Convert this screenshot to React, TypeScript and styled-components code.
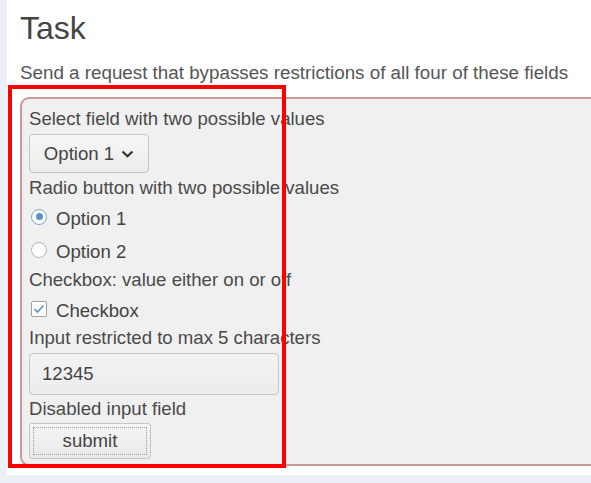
import React from "react";
import styled, { createGlobalStyle } from "styled-components";

const GlobalStyle = createGlobalStyle`
  html, body { margin: 0; padding: 0; }
  body {
    background: #eceff5;
    font-family: "Liberation Sans", Arial, sans-serif;
    width: 591px;
    height: 483px;
    overflow: hidden;
  }
`;

const Page = styled.div`
  position: relative;
  margin-left: 7px;
  height: 475px;
  background: #ffffff;
  padding: 10px 0 0 13px;
  box-sizing: border-box;
  overflow: hidden;
`;

const Title = styled.h1`
  margin: 0;
  font-size: 32px;
  font-weight: 400;
  color: #444;
  line-height: 36px;
`;

const Lead = styled.p`
  margin: 17px 0 0;
  font-size: 18.8px;
  color: #555;
  line-height: 20px;
  white-space: nowrap;
`;

const Fieldset = styled.div`
  margin-top: 14px;
  width: 600px;
  height: 369px;
  box-sizing: border-box;
  border: 2px solid #c99a9a;
  border-right: none;
  border-radius: 9px 0 0 9px;
  background: #f0f0f0;
  padding: 10px 0 0 7px;
  display: flex;
  flex-direction: column;
  align-items: flex-start;
  color: #4a4a4a;
  font-size: 18.6px;
`;

const Label = styled.div<{ $mt?: number }>`
  line-height: 20px;
  margin-top: ${(p) => p.$mt ?? 0}px;
  white-space: nowrap;
`;

const SelectBox = styled.div`
  margin-top: 5px;
  width: 120px;
  height: 39px;
  box-sizing: border-box;
  border: 1px solid #c6c6c6;
  border-radius: 4px;
  background: linear-gradient(#f6f6f6, #ececec);
  display: flex;
  align-items: center;
  justify-content: center;
  gap: 7px;
  font-size: 18.6px;
  color: #444;
`;

const Choice = styled.div<{ $mt?: number }>`
  display: flex;
  align-items: center;
  gap: 9px;
  margin-top: ${(p) => p.$mt ?? 0}px;
  margin-left: 2px;
  line-height: 20px;
  font-size: 18.6px;
  color: #444;
`;

const RadioDot = styled.span<{ $on?: boolean }>`
  width: 16px;
  height: 16px;
  box-sizing: border-box;
  border-radius: 50%;
  border: 1px solid ${(p) => (p.$on ? "#7aa3d0" : "#b4b4b4")};
  background: #fff;
  display: inline-flex;
  align-items: center;
  justify-content: center;
  margin-top: -5px;
  &::after {
    content: "";
    width: 7px;
    height: 7px;
    border-radius: 50%;
    background: ${(p) => (p.$on ? "#5b8fcc" : "transparent")};
  }
`;

const CheckBox = styled.span`
  width: 16px;
  height: 16px;
  box-sizing: border-box;
  border: 1px solid #a0a0a0;
  border-radius: 2px;
  background: #fff;
  display: inline-flex;
  align-items: center;
  justify-content: center;
  margin-top: -5px;
`;

const TextInput = styled.div`
  margin-top: 5px;
  width: 250px;
  height: 42px;
  box-sizing: border-box;
  border: 1px solid #c6c6c6;
  border-radius: 4px;
  background: linear-gradient(#f3f3f3, #ececec);
  display: flex;
  align-items: center;
  padding-left: 12px;
  font-size: 18.6px;
  color: #444;
`;

const Button = styled.div`
  margin-top: 4px;
  width: 122px;
  height: 36px;
  box-sizing: border-box;
  border: 1px solid #c6c6c6;
  border-radius: 3px;
  background: linear-gradient(#f6f6f6, #e9e9e9);
  padding: 3px;
  display: flex;
`;

const ButtonInner = styled.span`
  flex: 1;
  border: 1px dotted #9a9a9a;
  display: flex;
  align-items: center;
  justify-content: center;
  font-size: 18.6px;
  color: #444;
`;

const Annotation = styled.div`
  position: absolute;
  left: 1px;
  top: 85px;
  width: 278px;
  height: 383px;
  box-sizing: border-box;
  border: 4px solid #ff0000;
  pointer-events: none;
`;

export default function App() {
  return (
    <>
      <GlobalStyle />
      <Page>
        <Title>Task</Title>
        <Lead>Send a request that bypasses restrictions of all four of these fields</Lead>
        <Fieldset>
          <Label>Select field with two possible values</Label>
          <SelectBox>
            Option 1
            <svg width="13" height="8" viewBox="0 0 13 8">
              <path d="M1.5 1.5 L6.5 6.3 L11.5 1.5" fill="none" stroke="#333" strokeWidth="2.2" />
            </svg>
          </SelectBox>
          <Label $mt={5}>Radio button with two possible values</Label>
          <Choice $mt={11}>
            <RadioDot $on />
            Option 1
          </Choice>
          <Choice $mt={13}>
            <RadioDot />
            Option 2
          </Choice>
          <Label $mt={8}>Checkbox: value either on or off</Label>
          <Choice $mt={11}>
            <CheckBox>
              <svg width="12" height="10" viewBox="0 0 12 10">
                <path d="M1.5 5 L4.5 8 L10.5 1.5" fill="none" stroke="#5b8fcc" strokeWidth="1.6" />
              </svg>
            </CheckBox>
            Checkbox
          </Choice>
          <Label $mt={7}>Input restricted to max 5 characters</Label>
          <TextInput>12345</TextInput>
          <Label $mt={4}>Disabled input field</Label>
          <Button>
            <ButtonInner>submit</ButtonInner>
          </Button>
        </Fieldset>
        <Annotation />
      </Page>
    </>
  );
}
